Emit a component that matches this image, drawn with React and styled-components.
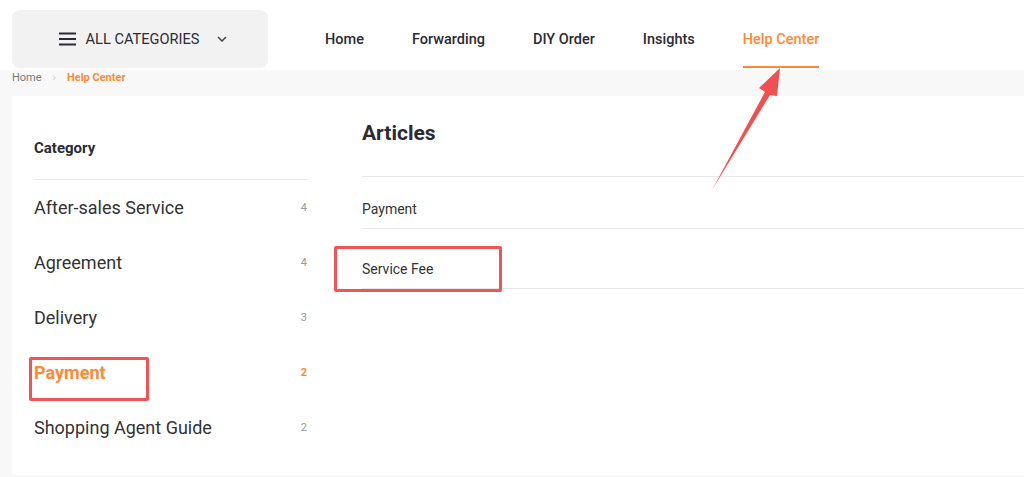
import React from "react";
import styled, { createGlobalStyle } from "styled-components";

const GlobalStyle = createGlobalStyle`
  body {
    margin: 0;
    padding: 0;
    background-color: #f8f8f8;
    font-family: Roboto, "Liberation Sans", Arial, sans-serif;
    color: #333;
    overflow: hidden;
  }
`;

const Page = styled.div`
  width: 1024px;
  height: 477px;
  position: relative;
  overflow: hidden;
`;

const Header = styled.div`
  height: 70px;
  box-sizing: border-box;
  background: #fff;
  display: flex;
  align-items: flex-start;
  padding: 10px 12px 0;
`;

const CategoryButton = styled.div`
  width: 256px;
  height: 58px;
  background: #f2f2f2;
  border-radius: 8px;
  display: flex;
  align-items: center;
  justify-content: center;
  gap: 10px;
  padding-left: 6px;
  box-sizing: border-box;
  font-size: 14.6px;
  color: #2b2b33;
`;

const Nav = styled.nav`
  display: flex;
  gap: 48px;
  margin-left: 57px;
`;

const NavItem = styled.div`
  height: 58px;
  box-sizing: border-box;
  display: flex;
  align-items: center;
  font-size: 14.5px;
  font-weight: 500;
  color: ${(p) => (p.active ? "#ff8a33" : "#2b2b33")};
  border-bottom: 2px solid ${(p) => (p.active ? "#ff8a33" : "transparent")};
  padding-top: 2px;
`;

const Breadcrumb = styled.div`
  height: 26px;
  display: flex;
  align-items: flex-start;
  padding: 1px 12px 0;
  box-sizing: border-box;
  font-size: 11px;
  gap: 11px;
  color: #777;
`;

const Crumb = styled.span`
  color: ${(p) => (p.active ? "#ff8a33" : "#777")};
  font-weight: ${(p) => (p.active ? 700 : 400)};
`;

const Sep = styled.span`
  color: #c8c8c8;
`;

const Card = styled.div`
  margin-left: 12px;
  height: 379px;
  background: #fff;
  display: flex;
`;

const Sidebar = styled.div`
  width: 273px;
  margin-left: 22px;
  padding-top: 40px;
`;

const SideTitle = styled.div`
  font-size: 15px;
  font-weight: 700;
  line-height: 24px;
  color: #2b2b33;
  padding-bottom: 19px;
  border-bottom: 1px solid #e8e8e8;
`;

const CatItem = styled.div`
  position: relative;
  height: 55px;
  display: flex;
  align-items: center;
  justify-content: space-between;
  font-size: 18px;
  color: ${(p) => (p.active ? "#ff8a33" : "#333")};
  font-weight: ${(p) => (p.active ? 700 : 400)};
`;

const Count = styled.span`
  font-size: 11px;
  color: ${(p) => (p.active ? "#ff8a33" : "#999")};
  font-weight: ${(p) => (p.active ? 700 : 400)};
`;

const Main = styled.div`
  flex: 1;
  margin-left: 55px;
  padding-top: 24px;
`;

const MainTitle = styled.h2`
  margin: 0;
  font-size: 21px;
  font-weight: 700;
  line-height: 26px;
  color: #2b2b33;
  padding-bottom: 30px;
  border-bottom: 1px solid #e8e8e8;
`;

const ArticleRow = styled.div`
  position: relative;
  padding: ${(p) => p.top}px 0 ${(p) => p.bottom}px;
  line-height: 16px;
  font-size: 14px;
  color: #333;
  border-bottom: 1px solid #e8e8e8;
`;

const Highlight = styled.div`
  position: absolute;
  border: 3px solid #f05454;
  border-radius: 2px;
  box-sizing: border-box;
  pointer-events: none;
`;

const Arrow = styled.svg`
  position: absolute;
  left: 0;
  top: 0;
  pointer-events: none;
`;

function MenuIcon() {
  return (
    <svg width="17" height="14" viewBox="0 0 17 14">
      <rect x="0" y="0.5" width="17" height="2" fill="#2b2b33" />
      <rect x="0" y="6" width="17" height="2" fill="#2b2b33" />
      <rect x="0" y="11.5" width="17" height="2" fill="#2b2b33" />
    </svg>
  );
}

function ChevronDown() {
  return (
    <svg width="10" height="6" viewBox="0 0 10 6" style={{ marginLeft: 8 }}>
      <path d="M1 1 L5 5 L9 1" stroke="#444" strokeWidth="1.5" fill="none" />
    </svg>
  );
}

const categories = [
  { name: "After-sales Service", count: 4 },
  { name: "Agreement", count: 4 },
  { name: "Delivery", count: 3 },
  { name: "Payment", count: 2, active: true },
  { name: "Shopping Agent Guide", count: 2 },
];

const navs = ["Home", "Forwarding", "DIY Order", "Insights", "Help Center"];

export default function App() {
  return (
    <>
      <GlobalStyle />
      <Page>
        <Header>
          <CategoryButton>
            <MenuIcon />
            <span>ALL CATEGORIES</span>
            <ChevronDown />
          </CategoryButton>
          <Nav>
            {navs.map((n) => (
              <NavItem key={n} active={n === "Help Center"}>
                {n}
              </NavItem>
            ))}
          </Nav>
        </Header>
        <Breadcrumb>
          <Crumb>Home</Crumb>
          <Sep>›</Sep>
          <Crumb active>Help Center</Crumb>
        </Breadcrumb>
        <Card>
          <Sidebar>
            <SideTitle>Category</SideTitle>
            {categories.map((c) => (
              <CatItem key={c.name} active={c.active}>
                <span>{c.name}</span>
                <Count active={c.active}>{c.count}</Count>
                {c.active && (
                  <Highlight style={{ left: -5, top: 12, width: 120, height: 44 }} />
                )}
              </CatItem>
            ))}
          </Sidebar>
          <Main>
            <MainTitle>Articles</MainTitle>
            <ArticleRow top={24} bottom={11}>Payment</ArticleRow>
            <ArticleRow top={32} bottom={11}>
              Service Fee
              <Highlight style={{ left: -28, top: 17, width: 168, height: 46 }} />
            </ArticleRow>
          </Main>
        </Card>
        <Arrow width="1024" height="477" viewBox="0 0 1024 477">
          <polygon
            points="712,190 765,92 759,88 780,68 777,96 770,95"
            fill="#f25050"
          />
        </Arrow>
      </Page>
    </>
  );
}
